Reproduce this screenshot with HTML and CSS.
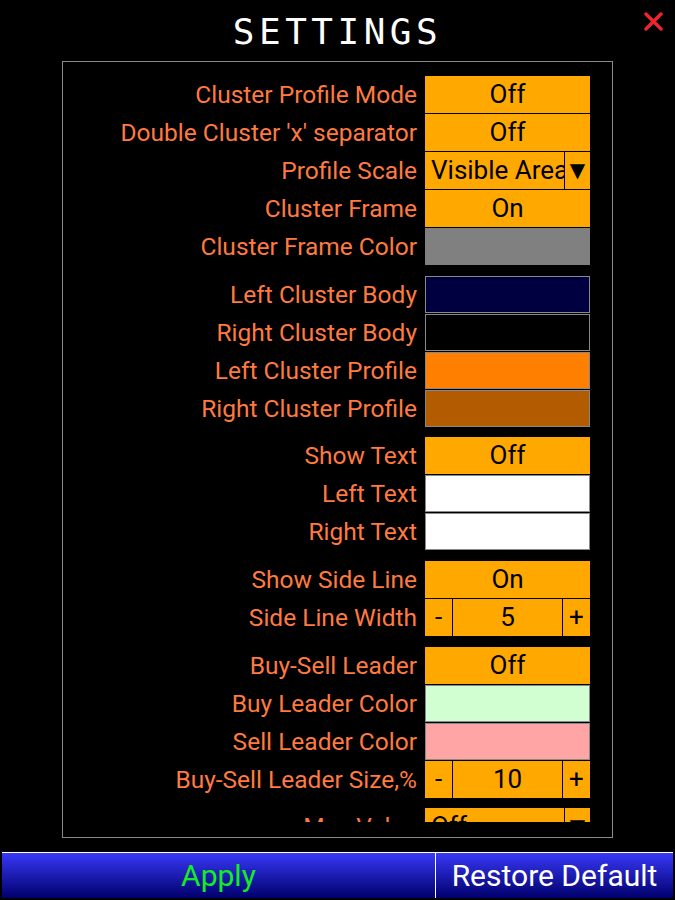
FILE: index.html
```html
<!DOCTYPE html>
<html lang="en">
  <head>
    <meta charset="UTF-8" />
    <meta name="viewport" content="width=device-width, initial-scale=1.0" />
    <title>Settings</title>
    <link rel="stylesheet" href="styles.css">
  </head>
  <body>
    <div class="dialog">
      <!-- header -->
      <h1 class="title">SETTINGS</h1>
      <button class="close" type="button" aria-label="Close">
        <svg width="19" height="19" viewBox="0 0 19 19">
          <path d="M2 2 L17 17 M17 2 L2 17" stroke="#ee2530" stroke-width="3.4" stroke-linecap="round" fill="none" />
        </svg>
      </button>

      <!-- settings list -->
      <div class="panel">
        <div class="scroll">
          <div class="group">
            <div class="row"><span class="label">Cluster Profile Mode</span><div class="ctrl toggle">Off</div></div>
            <div class="row"><span class="label">Double Cluster 'x' separator</span><div class="ctrl toggle">Off</div></div>
            <div class="row"><span class="label">Profile Scale</span>
              <div class="ctrl select"><span class="select-value">Visible Area</span><span class="select-arrow">▼</span></div>
            </div>
            <div class="row"><span class="label">Cluster Frame</span><div class="ctrl toggle">On</div></div>
            <div class="row"><span class="label">Cluster Frame Color</span><div class="ctrl swatch swatch-grey"></div></div>
          </div>

          <div class="group">
            <div class="row"><span class="label">Left Cluster Body</span><div class="ctrl swatch" style="background:#000040"></div></div>
            <div class="row"><span class="label">Right Cluster Body</span><div class="ctrl swatch" style="background:#000000"></div></div>
            <div class="row"><span class="label">Left Cluster Profile</span><div class="ctrl swatch" style="background:#ff8000"></div></div>
            <div class="row"><span class="label">Right Cluster Profile</span><div class="ctrl swatch" style="background:#b35b00"></div></div>
          </div>

          <div class="group">
            <div class="row"><span class="label">Show Text</span><div class="ctrl toggle">Off</div></div>
            <div class="row"><span class="label">Left Text</span><div class="ctrl swatch" style="background:#ffffff"></div></div>
            <div class="row"><span class="label">Right Text</span><div class="ctrl swatch" style="background:#ffffff"></div></div>
          </div>

          <div class="group">
            <div class="row"><span class="label">Show Side Line</span><div class="ctrl toggle">On</div></div>
            <div class="row"><span class="label">Side Line Width</span>
              <div class="ctrl stepper"><span class="step step-minus">-</span><span class="step-value">5</span><span class="step step-plus">+</span></div>
            </div>
          </div>

          <div class="group">
            <div class="row"><span class="label">Buy-Sell Leader</span><div class="ctrl toggle">Off</div></div>
            <div class="row"><span class="label">Buy Leader Color</span><div class="ctrl swatch" style="background:#d2ffd2"></div></div>
            <div class="row"><span class="label">Sell Leader Color</span><div class="ctrl swatch" style="background:#ffa5a5"></div></div>
            <div class="row"><span class="label">Buy-Sell Leader Size,%</span>
              <div class="ctrl stepper"><span class="step step-minus">-</span><span class="step-value">10</span><span class="step step-plus">+</span></div>
            </div>
          </div>

          <div class="group">
            <div class="row"><span class="label">Max Value</span>
              <div class="ctrl select"><span class="select-value">Off</span><span class="select-arrow">▼</span></div>
            </div>
          </div>
        </div>
      </div>

      <!-- footer buttons -->
      <div class="footer">
        <button class="btn btn-apply" type="button">Apply</button>
        <button class="btn btn-restore" type="button">Restore Default</button>
      </div>
    </div>
  </body>
</html>
```

FILE: styles.css
```css
/* base */
body {
  margin: 0;
  background: #000;
  font-family: Roboto, "Liberation Sans", sans-serif;
}

.dialog {
  position: relative;
  width: 675px;
  height: 900px;
}

/* header */
.title {
  margin: 0;
  height: 61px;
  line-height: 64px;
  text-align: center;
  font-family: "DejaVu Sans Mono", monospace;
  font-weight: normal;
  font-size: 36px;
  letter-spacing: 4.5px;
  color: #fff;
}

.close {
  position: absolute;
  top: 12px;
  right: 12px;
  padding: 0;
  border: none;
  background: none;
  width: 19px;
  height: 19px;
  cursor: pointer;
}

.close svg {
  display: block;
}

/* settings panel */
.panel {
  margin: 0 62px;
  width: 551px;
  height: 777px;
  box-sizing: border-box;
  border: 1px solid #8a8a8a;
  padding-bottom: 15px;
}

.scroll {
  height: 760px;
  overflow: hidden;
  padding-top: 14px;
  box-sizing: border-box;
}

.group {
  display: flex;
  flex-direction: column;
  gap: 1px;
  margin-bottom: 10.7px;
}

.row {
  display: flex;
  height: 37px;
  padding-right: 22px;
}

.label {
  flex: 1;
  padding-right: 8px;
  text-align: right;
  line-height: 37px;
  font-size: 24.5px;
  color: #ff7a40;
  white-space: nowrap;
}

.ctrl {
  width: 165px;
  height: 37px;
  box-sizing: border-box;
  font-size: 26px;
  color: #000;
}

.toggle {
  background: #ffa800;
  text-align: center;
  line-height: 37px;
}

.swatch {
  border: 1px solid #888;
}

.swatch-grey {
  background: #808080;
  border-color: #808080;
}

/* dropdown */
.select {
  display: flex;
  background: #ffa800;
  line-height: 37px;
}

.select-value {
  flex: 1;
  padding-left: 6px;
  overflow: hidden;
  white-space: nowrap;
}

.select-arrow {
  width: 26px;
  box-sizing: border-box;
  border-left: 1px solid #000;
  text-align: center;
  font-size: 20px;
  font-family: "DejaVu Sans", sans-serif;
}

/* stepper */
.stepper {
  display: flex;
  background: #ffa800;
  line-height: 37px;
}

.step {
  width: 28px;
  box-sizing: border-box;
  text-align: center;
}

.step-minus {
  border-right: 1px solid #000;
}

.step-plus {
  border-left: 1px solid #000;
}

.step-value {
  flex: 1;
  text-align: center;
}

/* footer */
.footer {
  display: flex;
  margin: 14px 2px 0;
  border-top: 1px solid #fff;
  height: 46px;
  box-sizing: border-box;
}

.btn {
  border: none;
  margin: 0;
  padding: 0;
  font-family: Roboto, "Liberation Sans", sans-serif;
  font-size: 30px;
  background: linear-gradient(#3838f8, #00006c);
  cursor: pointer;
}

.btn-apply {
  width: 433px;
  color: #14ee1e;
}

.btn-restore {
  flex: 1;
  border-left: 1px solid #fff;
  color: #fff;
}
```
